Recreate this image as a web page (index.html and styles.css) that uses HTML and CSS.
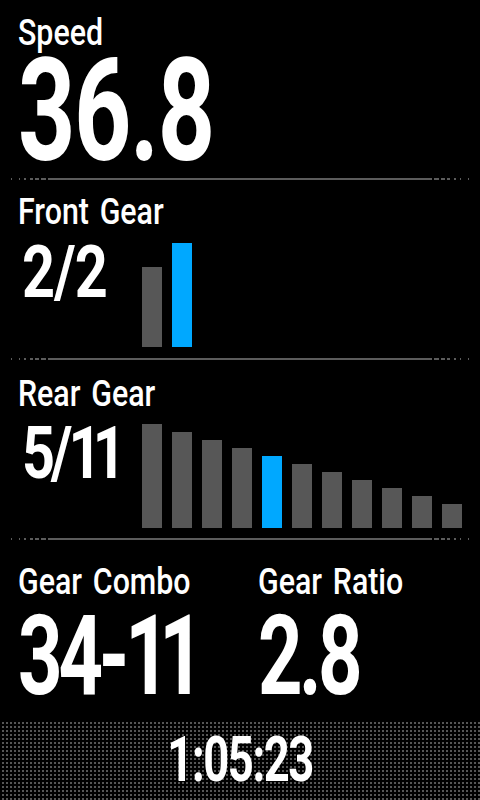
FILE: index.html
```html
<!DOCTYPE html>
<html lang="en">
<head>
    <meta charset="UTF-8">
    <title>Gear Data</title>
    <link rel="stylesheet" href="styles.css">
</head>
<body>
    <div class="screen">

        <section class="field speed">
            <div class="label"><span>Speed</span></div>
            <div class="value big"><span>36.8</span></div>
        </section>

        <div class="rule">
            <svg width="480" height="2" viewBox="0 0 480 2">
                <rect x="11" y="0" width="1" height="2" />
                <rect x="19" y="0" width="1" height="2" />
                <rect x="24" y="0" width="2" height="2" />
                <rect x="30" y="0" width="3" height="2" />
                <rect x="35" y="0" width="4" height="2" />
                <rect x="41" y="0" width="5" height="2" />
                <rect x="48" y="0" width="384" height="2" />
                <rect x="434" y="0" width="5" height="2" />
                <rect x="441" y="0" width="4" height="2" />
                <rect x="447" y="0" width="3" height="2" />
                <rect x="454" y="0" width="2" height="2" />
                <rect x="460" y="0" width="1" height="2" />
                <rect x="468" y="0" width="1" height="2" />
            </svg>
        </div>

        <section class="field gear front">
            <div class="label"><span>Front Gear</span></div>
            <div class="gear-row">
                <div class="value mid"><span>2/2</span></div>
                <div class="bars">
                    <i style="height:80px"></i>
                    <i class="on" style="height:104px"></i>
                </div>
            </div>
        </section>

        <div class="rule">
            <svg width="480" height="2" viewBox="0 0 480 2">
                <rect x="11" y="0" width="1" height="2" />
                <rect x="19" y="0" width="1" height="2" />
                <rect x="24" y="0" width="2" height="2" />
                <rect x="30" y="0" width="3" height="2" />
                <rect x="35" y="0" width="4" height="2" />
                <rect x="41" y="0" width="5" height="2" />
                <rect x="48" y="0" width="384" height="2" />
                <rect x="434" y="0" width="5" height="2" />
                <rect x="441" y="0" width="4" height="2" />
                <rect x="447" y="0" width="3" height="2" />
                <rect x="454" y="0" width="2" height="2" />
                <rect x="460" y="0" width="1" height="2" />
                <rect x="468" y="0" width="1" height="2" />
            </svg>
        </div>

        <section class="field gear rear">
            <div class="label"><span>Rear Gear</span></div>
            <div class="gear-row">
                <div class="value mid ones"><span>5/<em>11</em></span></div>
                <div class="bars">
                    <i style="height:104px"></i>
                    <i style="height:96px"></i>
                    <i style="height:88px"></i>
                    <i style="height:80px"></i>
                    <i class="on" style="height:72px"></i>
                    <i style="height:64px"></i>
                    <i style="height:56px"></i>
                    <i style="height:48px"></i>
                    <i style="height:40px"></i>
                    <i style="height:32px"></i>
                    <i style="height:24px"></i>
                </div>
            </div>
        </section>

        <div class="rule">
            <svg width="480" height="2" viewBox="0 0 480 2">
                <rect x="11" y="0" width="1" height="2" />
                <rect x="19" y="0" width="1" height="2" />
                <rect x="24" y="0" width="2" height="2" />
                <rect x="30" y="0" width="3" height="2" />
                <rect x="35" y="0" width="4" height="2" />
                <rect x="41" y="0" width="5" height="2" />
                <rect x="48" y="0" width="384" height="2" />
                <rect x="434" y="0" width="5" height="2" />
                <rect x="441" y="0" width="4" height="2" />
                <rect x="447" y="0" width="3" height="2" />
                <rect x="454" y="0" width="2" height="2" />
                <rect x="460" y="0" width="1" height="2" />
                <rect x="468" y="0" width="1" height="2" />
            </svg>
        </div>

        <section class="field pair">
            <div class="col">
                <div class="label"><span>Gear Combo</span></div>
                <div class="value wide ones"><span>34-<em>11</em></span></div>
            </div>
            <div class="col">
                <div class="label"><span>Gear Ratio</span></div>
                <div class="value wide"><span>2.8</span></div>
            </div>
        </section>

        <footer class="timer"><span>1:05:23</span></footer>

    </div>
</body>
</html>
```

FILE: styles.css
```css
/* Gear data screen */

html,
body {
    margin: 0;
    padding: 0;
    background: #000;
}

.screen {
    width: 480px;
    height: 800px;
    overflow: hidden;
    background: #000;
    color: #FFF;
    font-family: Roboto, "Liberation Sans", sans-serif;
    display: flex;
    flex-direction: column;
}

.field {
    box-sizing: border-box;
    height: 178px;
    padding-left: 18px;
    display: flex;
    flex-direction: column;
}

.label {
    font-size: 37px;
    font-weight: 500;
    line-height: 30px;
    height: 30px;
    white-space: nowrap;
}

.label span,
.value span,
.timer span {
    display: inline-block;
    transform-origin: left center;
    white-space: nowrap;
}

.label span {
    transform: scaleX(0.82);
    word-spacing: 4px;
}

.value {
    font-weight: 700;
    white-space: nowrap;
}

.value span {
    transform: scaleX(0.7);
    letter-spacing: -2px;
}

.value em {
    font-style: normal;
}

/* speed */

.speed {
    padding-top: 18px;
}

.value.big {
    font-size: 143px;
    line-height: 110px;
    height: 110px;
    margin-top: 8px;
}

/* gears */

.front {
    padding-top: 17px;
}

.rear {
    padding-top: 19px;
}

.gear-row {
    display: grid;
    grid-template-columns: 124px auto;
    height: 104px;
}

.front .gear-row {
    margin-top: 16px;
}

.rear .gear-row {
    margin-top: 15px;
}

.value.mid {
    font-size: 72px;
    line-height: 60px;
    height: 60px;
    padding-left: 4px;
}

.value.mid span {
    transform: scaleX(0.8);
    letter-spacing: -1px;
}

/* the "1" glyph sits in a wide cell, pull the pair in */
.value.mid.ones span {
    letter-spacing: -5px;
}

.value.mid.ones em {
    letter-spacing: -11px;
}

.bars {
    display: flex;
    align-items: flex-end;
    gap: 10px;
}

.bars i {
    display: block;
    width: 20px;
    background: #575757;
}

.bars i.on {
    background: #00A8FF;
}

/* rule */

.rule {
    height: 2px;
    line-height: 0;
}

.rule svg {
    display: block;
    fill: #5C5C5C;
}

/* combo + ratio */

.pair {
    height: 180px;
    padding-top: 27px;
    flex-direction: row;
}

.pair .col {
    width: 240px;
    display: flex;
    flex-direction: column;
}

.value.wide {
    font-size: 111px;
    line-height: 90px;
    height: 90px;
    margin-top: 14px;
}

.value.wide span {
    letter-spacing: -5px;
}

.value.wide.ones span {
    letter-spacing: -6px;
}

.value.wide.ones em {
    letter-spacing: -15px;
}

/* timer */

.timer {
    height: 80px;
    line-height: 80px;
    font-size: 63px;
    font-weight: 700;
    text-align: center;
    background-color: #555;
    background-image:
        linear-gradient(to right, #000 2px, transparent 2px),
        linear-gradient(to bottom, #000 2px, transparent 2px);
    background-size: 4px 4px;
}

.timer span {
    transform-origin: center center;
    transform: scaleX(0.72);
    letter-spacing: -2px;
}
```
